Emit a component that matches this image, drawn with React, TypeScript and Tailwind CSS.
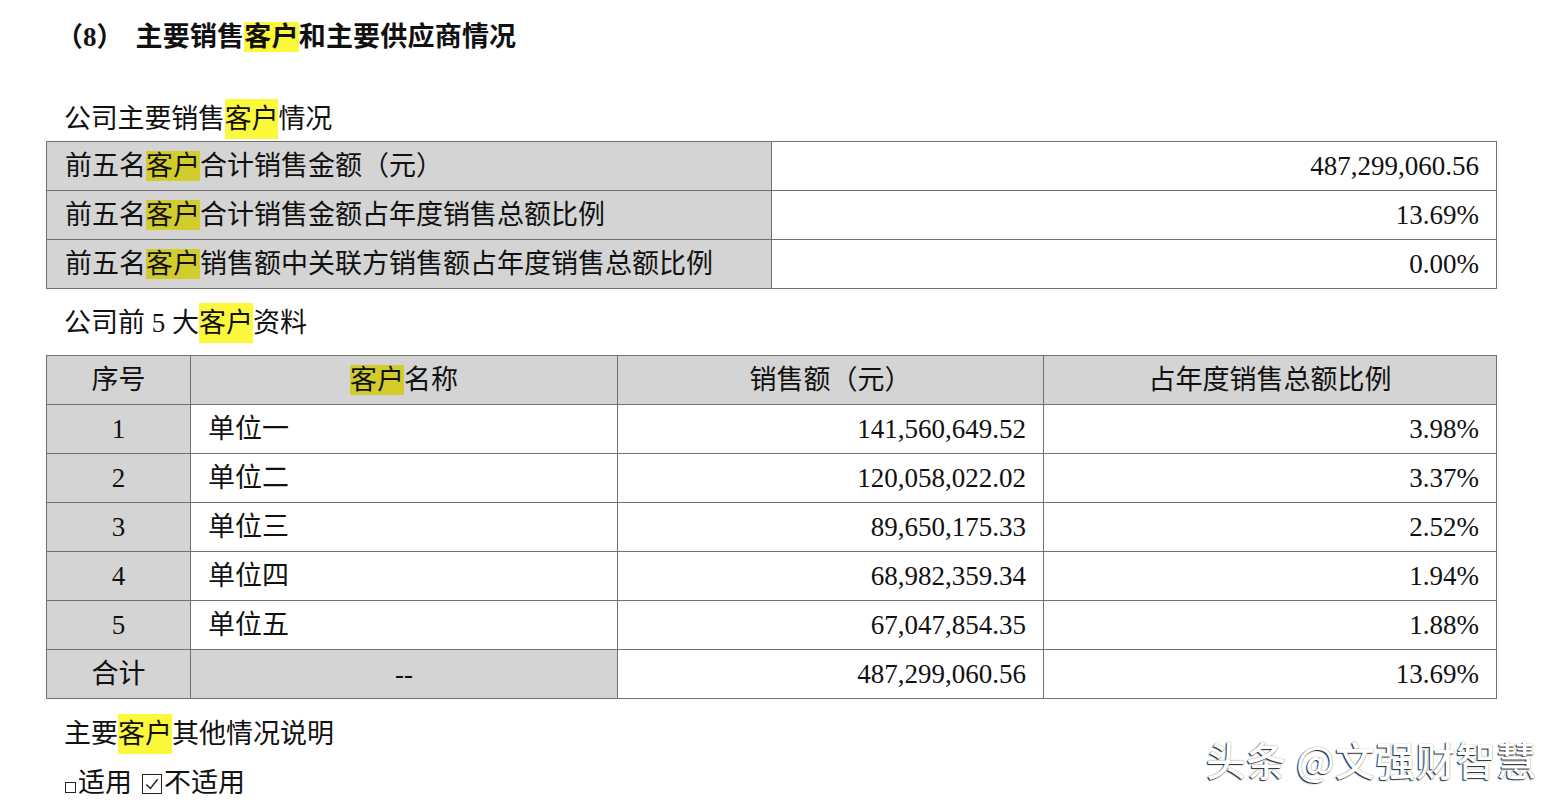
import React from 'react';

const FONT = "font-['Liberation_Serif','Noto_Sans_CJK_SC',serif]";

// highlighted "客户" — brighter on white paper, olive on gray cells
const Hl: React.FC<{ gray?: boolean }> = ({ gray }) => (
  <span className={gray ? 'bg-[#d2cd2c]' : 'bg-[#fcf83c]'}>客户</span>
);

const SUMMARY = [
  { label: <>前五名<Hl gray />合计销售金额（元）</>, value: '487,299,060.56' },
  { label: <>前五名<Hl gray />合计销售金额占年度销售总额比例</>, value: '13.69%' },
  { label: <>前五名<Hl gray />销售额中关联方销售额占年度销售总额比例</>, value: '0.00%' },
];

const CUSTOMERS = [
  { no: '1', name: '单位一', amount: '141,560,649.52', ratio: '3.98%' },
  { no: '2', name: '单位二', amount: '120,058,022.02', ratio: '3.37%' },
  { no: '3', name: '单位三', amount: '89,650,175.33', ratio: '2.52%' },
  { no: '4', name: '单位四', amount: '68,982,359.34', ratio: '1.94%' },
  { no: '5', name: '单位五', amount: '67,047,854.35', ratio: '1.88%' },
];

const cell = 'border border-[#707070] h-[49px] p-0 leading-none';

export default function App() {
  return (
    <div className={`relative w-[1558px] h-[804px] bg-white text-[#111] text-[27px] ${FONT} overflow-hidden`}>
      {/* Heading */}
      <div className="pt-[17px] pl-[56px] h-[57px] flex items-center font-bold">
        <span>（8）</span>
        <span className="ml-[12px] tracking-[0.2px]">主要销售<Hl />和主要供应商情况</span>
      </div>

      <div className="mt-[42px] pl-[64px] h-[40px] flex items-center tracking-[-0.2px]">
        公司主要销售<Hl />情况
      </div>

      {/* Summary table */}
      <table className="ml-[46px] mt-[2px] w-[1450px] border-collapse table-fixed">
        <colgroup>
          <col className="w-[725px]" />
          <col className="w-[725px]" />
        </colgroup>
        <tbody>
          {SUMMARY.map((row, i) => (
            <tr key={i}>
              <td className={`${cell} bg-[#d4d4d4] pl-[18px] text-left whitespace-nowrap`}>{row.label}</td>
              <td className={`${cell} bg-white pr-[17px] text-right`}>{row.value}</td>
            </tr>
          ))}
        </tbody>
      </table>

      <div className="mt-[14px] pl-[64px] h-[40px] flex items-center">
        公司前 5 大<Hl />资料
      </div>

      {/* Top 5 customers */}
      <table className="ml-[46px] mt-[12px] w-[1450px] border-collapse table-fixed">
        <colgroup>
          <col className="w-[144px]" />
          <col className="w-[427px]" />
          <col className="w-[426px]" />
          <col className="w-[453px]" />
        </colgroup>
        <thead>
          <tr className="bg-[#d4d4d4]">
            <th className={`${cell} font-normal text-center`}>序号</th>
            <th className={`${cell} font-normal text-center`}><Hl gray />名称</th>
            <th className={`${cell} font-normal text-center`}>销售额（元）</th>
            <th className={`${cell} font-normal text-center`}>占年度销售总额比例</th>
          </tr>
        </thead>
        <tbody>
          {CUSTOMERS.map((c) => (
            <tr key={c.no}>
              <td className={`${cell} bg-[#d4d4d4] text-center`}>{c.no}</td>
              <td className={`${cell} bg-white text-left pl-[17px]`}>{c.name}</td>
              <td className={`${cell} bg-white text-right pr-[17px]`}>{c.amount}</td>
              <td className={`${cell} bg-white text-right pr-[17px]`}>{c.ratio}</td>
            </tr>
          ))}
          <tr>
            <td className={`${cell} bg-[#d4d4d4] text-center`}>合计</td>
            <td className={`${cell} bg-[#d4d4d4] text-center`}>--</td>
            <td className={`${cell} bg-white text-right pr-[17px]`}>487,299,060.56</td>
            <td className={`${cell} bg-white text-right pr-[17px]`}>13.69%</td>
          </tr>
        </tbody>
      </table>

      <div className="mt-[15px] pl-[64px] h-[40px] flex items-center">
        主要<Hl />其他情况说明
      </div>

      <div className="mt-[9px] pl-[65px] h-[40px] flex items-center">
        <span className="inline-block w-[11px] h-[11px] border border-[#222] mt-[8px] mr-[2px]" />
        <span>适用</span>
        <span className="ml-[10px] mr-[2px] inline-flex items-center justify-center w-[20px] h-[20px] border-[1.5px] border-[#222] mt-[2px]">
          <svg viewBox="0 0 20 20" className="w-[16px] h-[16px]" fill="none" stroke="#222" strokeWidth="1.8">
            <path d="M3 10.5 L8 15.5 L17 4" />
          </svg>
        </span>
        <span>不适用</span>
      </div>

      {/* Watermark */}
      <div className="absolute left-[1206px] top-[734px] font-['Noto_Sans_CJK_SC',sans-serif] font-medium text-[40px] leading-[50px] tracking-[0.3px] text-white [text-shadow:-1px_1px_1px_rgba(0,0,0,0.85),0_0_1px_rgba(0,0,0,0.6)] whitespace-nowrap">
        头条 @文强财智慧
      </div>
    </div>
  );
}
